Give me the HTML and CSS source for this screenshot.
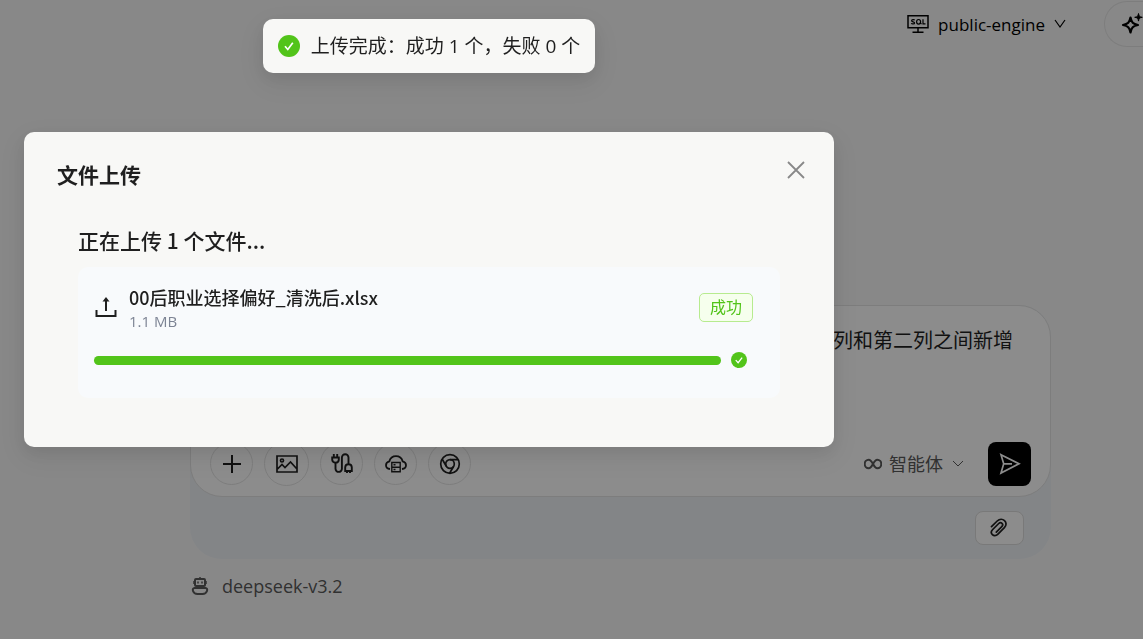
FILE: index.html
```html
<!DOCTYPE html>
<html lang="zh-CN">
<head>
  <meta charset="UTF-8">
  <meta name="viewport" content="width=device-width, initial-scale=1">
  <title>文件上传</title>
  <link rel="stylesheet" href="styles.css">
</head>
<body>
  <header class="topbar">
    <button type="button" class="engine">
      <svg width="22" height="20" viewBox="0 0 22 20" fill="none" stroke="currentColor" stroke-width="1.5">
        <path d="M1 1.8h20v12H1zM11 14v4M5.500 18.200h11"/>
        <path d="M7.600 6.200c-.3-.7-3-.9-3 .5 0 1.500 3 .7 3 2.200 0 1.400-2.900 1.300-3.200.3M14.500 10.200l-1.500-1.500M16 5.300v4.600h2.500" stroke-width="1.200"/>
        <ellipse cx="11.600" cy="7.800" rx="2" ry="2.300" stroke-width="1.200"/>
      </svg>
      <span>public-engine</span>
      <svg class="chevron" width="12" height="12" viewBox="0 0 12 12" fill="none" stroke="currentColor" stroke-width="1.200"><path d="M1 2l5 7 5-7"/></svg>
    </button>
    <button type="button" class="sparkle" aria-label="AI">
      <svg width="22" height="24" viewBox="0 0 22 24" fill="none" stroke="currentColor" stroke-width="2.200" stroke-linejoin="round">
        <path d="M9.500 5.500c1 5 2.500 6.500 7.500 7.500-5 1-6.500 2.500-7.500 7.500-1-5-2.500-6.500-7.500-7.500 5-1 6.500-2.500 7.500-7.500z"/>
        <path d="M17.500 1.500c.4 2.700 1.100 3.400 3.800 3.800-2.700.4-3.400 1.100-3.800 3.800-.4-2.700-1.100-3.400-3.800-3.800 2.700-.4 3.400-1.100 3.800-3.800z" fill="currentColor" stroke-width="1"/>
      </svg>
    </button>
  </header>

  <main class="chat">
    <div class="composer">
      <div class="input-card">
        <textarea class="prompt" aria-label="输入消息">列和第二列之间新增</textarea>
        <div class="toolbar">
          <div class="tools">
            <button type="button" class="tool" aria-label="添加">
              <svg width="20" height="20" viewBox="0 0 20 20" fill="none" stroke="currentColor" stroke-width="2"><path d="M10 1v18M1 10h18"/></svg>
            </button>
            <button type="button" class="tool tool-image" aria-label="图片">
              <svg width="22" height="18" viewBox="0 0 22 18" fill="none" stroke="currentColor" stroke-width="1.700"><path d="M1 1h20v16H1zM1.500 14l4.500-4.500 3 3L14.500 7l6 6.500"/><circle cx="6" cy="5.500" r="1.500"/></svg>
            </button>
            <button type="button" class="tool" aria-label="连接器">
              <svg width="22" height="22" viewBox="0 0 22 22" fill="none" stroke="currentColor" stroke-width="1.900">
                <path d="M2.800 1v3M6.200 1v3M1.200 4.500h6.600v2c0 2-1.400 3.200-3.300 3.200S1.200 8.500 1.200 6.500zM4.500 9.700v6a3.200 3.200 0 0 0 6.400 0V4.500a3.300 3.300 0 0 1 6.600 0v6.700M14.200 18v-3.400c0-2 1.400-3.300 3.300-3.300s3.300 1.300 3.300 3.300V18zM16 18v2M19 18v2"/>
              </svg>
            </button>
            <button type="button" class="tool" aria-label="云端数据">
              <svg width="22" height="18" viewBox="0 0 22 18" fill="none" stroke="currentColor" stroke-width="1.800">
                <path d="M5 14C2.500 13.700 1 12.200 1 10.200c0-2 1.300-3.300 3.300-3.800C5.200 3.200 7.700 1.200 11 1.200s5.800 2 6.700 5.200c2 .5 3.300 1.800 3.300 3.800 0 2-1.500 3.500-4 3.800"/>
                <path d="M6.800 7.500h8.400v9.300H6.800zM6.800 12.200h8.400M8.500 9.800h2M8.500 14.500h2" stroke-width="1.400"/>
              </svg>
            </button>
            <button type="button" class="tool" aria-label="浏览器">
              <svg width="22" height="22" viewBox="0 0 22 22" fill="none" stroke="currentColor" stroke-width="1.700"><circle cx="11" cy="11" r="9.300"/><circle cx="11" cy="11" r="4.300"/><path d="M11 6.700h8.200M7.300 13.200L3.100 6M14.700 13.200l-4.100 7.100"/></svg>
            </button>
          </div>
          <div class="actions">
            <button type="button" class="mode">
              <svg width="18" height="12" viewBox="0 0 18 12" fill="none" stroke="currentColor" stroke-width="2"><path d="M9 6C7.500 3.200 6.500 1.800 4.700 1.800a4 4.200 0 0 0 0 8.400C6.500 10.200 7.500 8.800 9 6s2.500-4.200 4.300-4.200a4 4.200 0 0 1 0 8.400C11.500 10.200 10.500 8.800 9 6z"/></svg>
              <span>智能体</span>
              <svg class="chevron" width="12" height="12" viewBox="0 0 12 12" fill="none" stroke="currentColor" stroke-width="1"><path d="M1 3l5 5 5-5"/></svg>
            </button>
            <button type="button" class="send" aria-label="发送">
              <svg width="22" height="22" viewBox="0 0 22 22" fill="none" stroke="currentColor" stroke-width="1.700"><path d="M2 1.700L20 10.700 2 20l2.700-9.200zM4.700 10.800H13"/></svg>
            </button>
          </div>
        </div>
      </div>
      <div class="attach-row">
        <button type="button" class="attach" aria-label="附件">
          <svg width="20" height="20" viewBox="0 0 20 20" fill="none" stroke="currentColor" stroke-width="1.700" stroke-linecap="round"><path d="M1.500 8.700L7.200 3c2.500-2.400 5.600-2 7.300-.4 1.900 1.800 2.200 4.600-.1 7L7.700 16.400c-1.700 1.700-4 1.600-5.300.3s-1.400-3.500.3-5.200l6-6c1.100-1.100 2.500-1 3.300-.2s.9 2.200-.2 3.300l-5.500 5.500"/></svg>
        </button>
      </div>
    </div>
    <div class="model">
      <svg width="18" height="20" viewBox="0 0 18 20" fill="none" stroke="currentColor" stroke-width="2"><rect x="4" y="3" width="10" height="7" rx="1"/><path d="M9 1v2M3 5v3M15 5v3M7 5.500v2M11 5.500v2" stroke-width="1.500"/><path d="M3.500 12h11c3 0 2 6-3 6h-5c-5 0-6-6-3-6z"/></svg>
      <span>deepseek-v3.2</span>
    </div>
  </main>

  <div class="overlay">
    <div class="toast" role="status">
      <svg width="22" height="22" viewBox="0 0 22 22"><circle cx="11" cy="11" r="11" fill="#52c41a"/><path d="M7 11.200l2.800 3.300 5-6.700" fill="none" stroke="#fff" stroke-width="1.700"/></svg>
      <span>上传完成：成功 1 个，失败 0 个</span>
    </div>

    <section class="modal" role="dialog" aria-modal="true" aria-labelledby="upload-title">
      <div class="modal-head">
        <h2 id="upload-title">文件上传</h2>
        <button type="button" class="close" aria-label="关闭">
          <svg width="18" height="18" viewBox="0 0 18 18" fill="none" stroke="currentColor" stroke-width="1.800"><path d="M1 1l16 16M17 1L1 17"/></svg>
        </button>
      </div>
      <div class="modal-body">
        <h3>正在上传 1 个文件...</h3>
        <div class="file">
          <div class="file-row">
            <svg width="22" height="22" viewBox="0 0 22 22" fill="none" stroke="currentColor" stroke-width="2"><path d="M11 15V4M1.500 14v6h19v-6"/><path d="M11 1l3.500 4.500h-7z" fill="currentColor" stroke="none"/></svg>
            <div class="file-info">
              <div class="file-name">00后职业选择偏好_清洗后.xlsx</div>
              <div class="file-size">1.1 MB</div>
            </div>
            <span class="tag">成功</span>
          </div>
          <div class="progress-row">
            <progress value="100" max="100" aria-label="上传进度"></progress>
            <svg width="16" height="16" viewBox="0 0 22 22"><circle cx="11" cy="11" r="11" fill="#52c41a"/><path d="M6.500 11.200l3.300 3.500 5.500-7" fill="none" stroke="#fff" stroke-width="1.800"/></svg>
          </div>
        </div>
      </div>
    </section>
  </div>
</body>
</html>
```

FILE: styles.css
```css
* { box-sizing: border-box; }
body {
  margin: 0;
  background: #f8f8f8;
  color: #1f1f1f;
  font-family: "Open Sans", "Noto Sans CJK SC", sans-serif;
  overflow: hidden;
}
button { font: inherit; color: inherit; background: none; border: none; padding: 0; cursor: pointer; }
svg { display: block; flex: none; }
h2, h3 { margin: 0; }

/* top bar */
.topbar { display: flex; justify-content: flex-end; align-items: center; height: 48px; }
.engine { display: flex; align-items: center; gap: 9px; margin-right: 38px; font-size: 17px; color: #000; }
.sparkle {
  display: flex; align-items: center; justify-content: flex-end;
  width: 39px; height: 46px; color: #000;
  border: 1px solid #e4e4e4; border-right: none; border-radius: 23px 0 0 23px;
}

/* composer */
.chat { padding: 257px 92px 0 190px; }
.composer { background: #eef2f6; border-radius: 32px; }
.input-card {
  display: flex; flex-direction: column; justify-content: space-between;
  height: 192px; padding: 20px 19px 10px;
  background: #fff; border: 1px solid #e4e4e4; border-radius: 32px;
}
.prompt {
  height: 90px; padding: 0 18px; border: none; outline: none; resize: none; overflow: hidden;
  background: none; color: #1f1f1f; font: 20px/30px "Open Sans", "Noto Sans CJK SC", sans-serif;
  text-align: right;
}
.toolbar, .tools, .actions, .mode { display: flex; align-items: center; }
.toolbar { justify-content: space-between; }
.tools { gap: 11px; }
.tool {
  display: flex; align-items: center; justify-content: center;
  width: 43px; height: 43px; border: 1px solid #e4e4e4; border-radius: 50%;
}
.tool-image { width: 45px; height: 45px; }
.mode { gap: 7px; margin-right: 24px; font-size: 18px; line-height: 24px; color: #595959; }
.mode .chevron { margin-left: 2px; }
.send {
  display: flex; align-items: center; justify-content: center;
  width: 43px; height: 44px; background: #000; color: #fff; border-radius: 8px;
}
.attach-row { display: flex; justify-content: flex-end; padding: 14px 27px; }
.attach {
  display: flex; align-items: center; justify-content: center;
  width: 49px; height: 34px; background: #fff; border: 1px solid #dcdcdc; border-radius: 8px;
}
.model { display: flex; align-items: center; gap: 13px; margin-top: 15px; padding-left: 1px; font-size: 18px; color: #595959; }

/* upload dialog and toast */
.overlay {
  position: fixed; inset: 0; display: flex; flex-direction: column; align-items: stretch;
  padding: 19px 309px 0 24px; background: rgba(0,0,0,0.45);
}
.toast {
  display: flex; align-items: center; gap: 11px; align-self: center;
  height: 54px; padding: 0 15px; background: #f8f8f6; border-radius: 10px;
  font-size: 19px; line-height: 28px; white-space: nowrap;
  box-shadow: 0 6px 16px rgba(0,0,0,0.08), 0 9px 28px 8px rgba(0,0,0,0.05);
}
.modal {
  margin-top: 59px; padding: 26px 29px 49px 33px; background: #f8f8f6; border-radius: 10px;
  box-shadow: 0 6px 16px rgba(0,0,0,0.08), 0 9px 28px 8px rgba(0,0,0,0.05);
}
.modal-head { display: flex; justify-content: space-between; }
.modal-head h2 { font-size: 21px; line-height: 34px; font-weight: 700; }
.close { display: flex; align-self: flex-start; padding: 3px 0; color: #888; }
.modal-body { padding: 32px 25px 0 21px; }
.modal-body h3, .file-name { font-family: "Noto Sans CJK SC", sans-serif; font-weight: 500; }
.modal-body h3 { font-size: 21px; line-height: 32px; }
.file { margin-top: 11px; padding: 16px; background: #f8fafc; border-radius: 10px; }
.file-row { display: flex; align-items: center; gap: 12px; padding: 0 11px 0 1px; }
.file-info { flex: 1; }
.file-name { font-size: 18px; line-height: 28px; }
.file-size { font-size: 15px; line-height: 20px; color: #7d8494; }
.tag {
  padding: 0 10px; font-size: 16px; line-height: 27px; color: #52c41a;
  background: #f6ffed; border: 1px solid #b7eb8f; border-radius: 5px;
}
.progress-row { display: flex; align-items: center; gap: 10px; padding: 21px 17px 14px 0; }
progress { flex: 1; height: 9px; border: none; appearance: none; -webkit-appearance: none; background: none; }
progress::-webkit-progress-bar { background: #eee; border-radius: 5px; }
progress::-webkit-progress-value { background: #52c41a; border-radius: 5px; }
progress::-moz-progress-bar { background: #52c41a; border-radius: 5px; }
```
